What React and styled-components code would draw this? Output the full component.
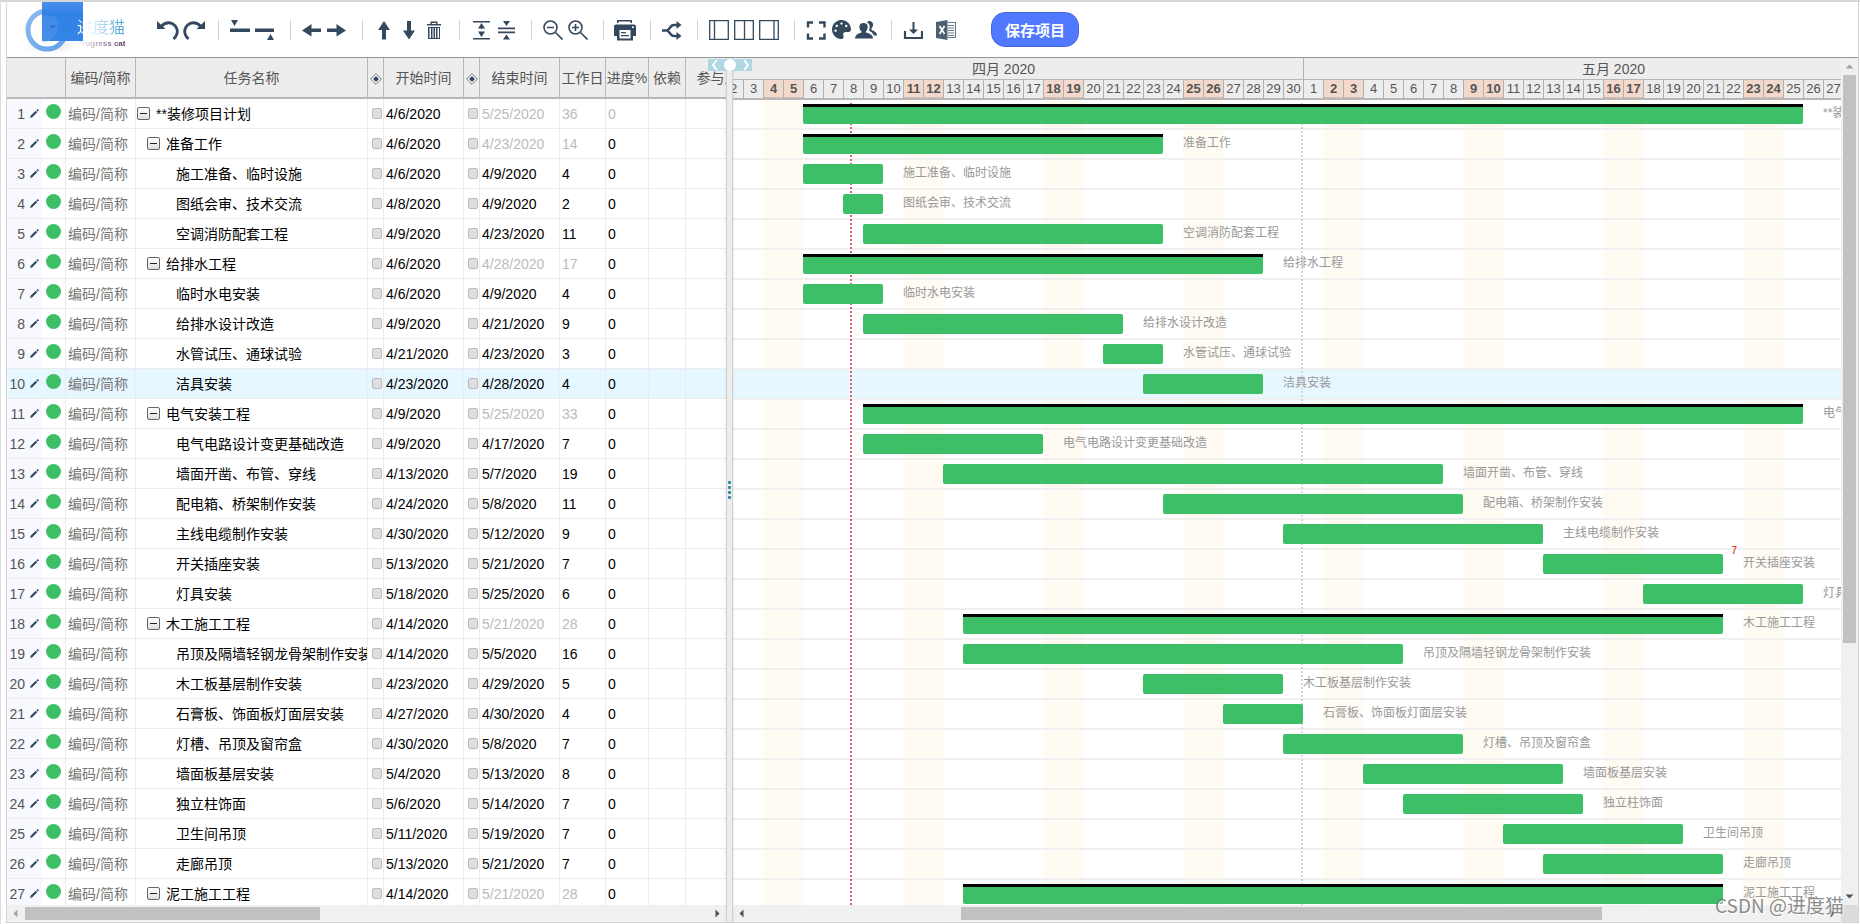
import React from 'react';
import styled, { createGlobalStyle, css } from 'styled-components';
import { FaPalette } from 'react-icons/fa';

const DAY = 20;
const ink = '#34495e';

const tasks = [
	{ name: '**装修项目计划', level: 0, group: true, start: '4/6', end: '5/25', work: 36, root: true },
	{ name: '准备工作', level: 1, group: true, start: '4/6', end: '4/23', work: 14 },
	{ name: '施工准备、临时设施', level: 2, start: '4/6', end: '4/9', work: 4 },
	{ name: '图纸会审、技术交流', level: 2, start: '4/8', end: '4/9', work: 2 },
	{ name: '空调消防配套工程', level: 2, start: '4/9', end: '4/23', work: 11 },
	{ name: '给排水工程', level: 1, group: true, start: '4/6', end: '4/28', work: 17 },
	{ name: '临时水电安装', level: 2, start: '4/6', end: '4/9', work: 4 },
	{ name: '给排水设计改造', level: 2, start: '4/9', end: '4/21', work: 9 },
	{ name: '水管试压、通球试验', level: 2, start: '4/21', end: '4/23', work: 3 },
	{ name: '洁具安装', level: 2, start: '4/23', end: '4/28', work: 4, active: true },
	{ name: '电气安装工程', level: 1, group: true, start: '4/9', end: '5/25', work: 33 },
	{ name: '电气电路设计变更基础改造', level: 2, start: '4/9', end: '4/17', work: 7 },
	{ name: '墙面开凿、布管、穿线', level: 2, start: '4/13', end: '5/7', work: 19 },
	{ name: '配电箱、桥架制作安装', level: 2, start: '4/24', end: '5/8', work: 11 },
	{ name: '主线电缆制作安装', level: 2, start: '4/30', end: '5/12', work: 9 },
	{ name: '开关插座安装', level: 2, start: '5/13', end: '5/21', work: 7, note: '7' },
	{ name: '灯具安装', level: 2, start: '5/18', end: '5/25', work: 6 },
	{ name: '木工施工工程', level: 1, group: true, start: '4/14', end: '5/21', work: 28 },
	{ name: '吊顶及隔墙轻钢龙骨架制作安装', level: 2, start: '4/14', end: '5/5', work: 16 },
	{ name: '木工板基层制作安装', level: 2, start: '4/23', end: '4/29', work: 5 },
	{ name: '石膏板、饰面板灯面层安装', level: 2, start: '4/27', end: '4/30', work: 4 },
	{ name: '灯槽、吊顶及窗帘盒', level: 2, start: '4/30', end: '5/8', work: 7 },
	{ name: '墙面板基层安装', level: 2, start: '5/4', end: '5/13', work: 8 },
	{ name: '独立柱饰面', level: 2, start: '5/6', end: '5/14', work: 7 },
	{ name: '卫生间吊顶', level: 2, start: '5/11', end: '5/19', work: 7 },
	{ name: '走廊吊顶', level: 2, start: '5/13', end: '5/21', work: 7 },
	{ name: '泥工施工工程', level: 1, group: true, start: '4/14', end: '5/21', work: 28 },
];

const months = [
	{ label: '四月 2020', count: 30, offset: 0 },
	{ label: '五月 2020', count: 31, offset: 30 },
];

// days since April 1st
const dayIndex = date => {
	const [m, d] = date.split('/').map(Number);
	return (m - 4) * 30 + d - 1;
}
// April 4th 2020 is a saturday
const isWeekend = index => index % 7 === 3 || index % 7 === 4;

const Svg = ({ children, size = 20, w }) => (
	<svg width={w || size} height={size} viewBox={`0 0 ${w || size} ${size}`} fill={ink} aria-hidden="true">{children}</svg>
)

const icons = {
	undo: (
		<Svg w={22}>
			<path d="M0 1V9H8.500Z" />
			<path d="M4 6.500Q9.500 1 15 3.500Q20.500 6.500 20.300 12Q20 16 16.500 19" fill="none" stroke={ink} strokeWidth="2.800" />
		</Svg>
	),
	redo: (
		<Svg w={22}>
			<path d="M22 1V9H13.500Z" />
			<path d="M18 6.500Q12.500 1 7 3.500Q1.500 6.500 1.700 12Q2 16 5.500 19" fill="none" stroke={ink} strokeWidth="2.800" />
		</Svg>
	),
	addAbove: <Svg><path d="M1 0h7L4.500 6ZM0 8.500h20v3.500H0Z" /></Svg>,
	addBelow: <Svg><path d="M12 20h7l-3.500-6ZM0 8.500h19v3.500H0Z" /></Svg>,
	left: <Svg><path d="M0 10.500 9.500 4v4.500H19V12H9.500v4.500Z" /></Svg>,
	right: <Svg><path d="M19 10.500 9.500 4v4.500H0V12h9.500v4.500Z" /></Svg>,
	up: <Svg><path d="M10 1 16 10h-4v9.500H8V10H4Z" /></Svg>,
	down: <Svg><path d="M10 19.500 16 10.500h-4V1H8v9.500H4Z" /></Svg>,
	trash: (
		<Svg>
			<path d="M6.500 1.500h7V4H17v1.500H3V4h3.500ZM8 3v1h4V3Z" fillRule="evenodd" />
			<path d="M4 7h12v12H4Zm1.500 1v10h1.500V8ZM8.500 8v10h1V8Zm2.500 0v10h1V8Zm2.500 0v10H15V8Z" fillRule="evenodd" />
		</Svg>
	),
	expand: <Svg><path d="M2 1h17v1.600H2ZM2 18h17v1.600H2ZM10.500 3 14 8.500H7ZM10.500 17 14 11.500H7ZM10 8h1v1h-1ZM10 11h1v1h-1Z" /></Svg>,
	collapse: <Svg><path d="M2 7.500h17v1.700H2ZM2 11.500h17v1.700H2ZM10.500 6 14 1H7ZM10.500 14.500 14 19.500H7Z" /></Svg>,
	zoomOut: (
		<Svg>
			<g fill="none" stroke={ink} strokeWidth="1.600"><circle cx="7.500" cy="7.500" r="6.500" /><path d="M12.500 12.500 19.500 19.500M4 7.500h7" /></g>
		</Svg>
	),
	zoomIn: (
		<Svg>
			<g fill="none" stroke={ink} strokeWidth="1.600"><circle cx="7.500" cy="7.500" r="6.500" /><path d="M12.500 12.500 19.500 19.500M4 7.500h7M7.500 4v7" /></g>
		</Svg>
	),
	print: (
		<Svg w={22} size={22}>
			<path d="M3 1h15v3h-1.500V2.500h-12V4H3ZM0 7.500Q0 5.500 2 5.500H20q2 0 2 2V17h-3v4.500H3V17H0ZM5.500 11v8.500h11V11ZM18 7.500V9h2V7.500Z" fillRule="evenodd" />
			<path d="M7 13h5v1.300H7ZM7 16h8v1.300H7Z" />
		</Svg>
	),
	branch: (
		<Svg>
			<path d="M0 10.500h6M5.500 10.500 9 6.500Q10 5 12 5h4M5.500 10.500 9 14.500Q10 16 12 16h4" fill="none" stroke={ink} strokeWidth="2.600" />
			<path d="M14.500 1 19.500 5 14.500 9ZM14.500 12 19.500 16l-5 4Z" />
		</Svg>
	),
	panelLeft: <Svg><path d="M.7.7h18.600v18.600H.7ZM5.500.7v18.600" fill="none" stroke={ink} strokeWidth="1.300" /></Svg>,
	panelMid: <Svg><path d="M.7.7h18.600v18.600H.7ZM10.500.7v18.600" fill="none" stroke={ink} strokeWidth="1.300" /></Svg>,
	panelRight: <Svg><path d="M.7.7h18.600v18.600H.7ZM15 .7v18.600" fill="none" stroke={ink} strokeWidth="1.300" /></Svg>,
	full: <Svg><path d="M2 7.500V2.500h5M13 2.500h5.500v5M18.500 13.500v5H13M7 18.500H2v-5" fill="none" stroke={ink} strokeWidth="2.400" /></Svg>,
	palette: <FaPalette size={19} color={ink} />,
	users: (
		<Svg w={22}>
			<path d="M12 2.500Q14-.2 17 2Q19.500 5 16.500 8.500V10Q22 11.500 22 15.500H19Q17.500 12 14 10.800Q15 7.500 14.500 5Q13.800 3 12 2.500Z" />
			<path d="M8.500 3Q12.800 3 12.800 7.300Q12.500 10 11 11.300V12.500Q18 14 18 18.500H0Q0 14 6.500 12.500V11.300Q4.500 10 4.300 7.300Q4.500 3 8.500 3Z" />
		</Svg>
	),
	download: <Svg><path d="M2 11v7h17v-7" fill="none" stroke={ink} strokeWidth="2.200" /><path d="M9.500 2h2v7.500H15L10.500 14 6 9.500h3.500Z" /></Svg>,
	excel: (
		<Svg>
			<path d="M0 2 11.500 0v20L0 18Z" fill="#4d5f72" />
			<path d="M3.500 6 8.500 14M8.500 6 3.500 14" stroke="#fff" strokeWidth="1.700" />
			<path d="M12 2.500h7.500v15H12M12 5.500h6M12 8h6M12 10.500h6M12 13h6M12 15.500h6" fill="none" stroke="#66788a" strokeWidth="1.200" />
		</Svg>
	),
};

const toolGroups = [
	[['undo', '撤销'], ['redo', '重做']],
	[['addAbove', '向上插入'], ['addBelow', '向下插入']],
	[['left', '升级'], ['right', '降级']],
	[['up', '上移'], ['down', '下移'], ['trash', '删除']],
	[['expand', '展开'], ['collapse', '折叠']],
	[['zoomOut', '缩小'], ['zoomIn', '放大']],
	[['print', '打印']],
	[['branch', '关键路径']],
	[['panelLeft', '左侧视图'], ['panelMid', '双栏视图'], ['panelRight', '右侧视图']],
	[['full', '全屏'], ['palette', '颜色'], ['users', '成员']],
];

const Pencil = () => (
	<svg width="9" height="9" viewBox="0 0 9 9" fill={ink} aria-hidden="true">
		<path d="M0 9 .8 6.600 5.800 1.800 7.200 3.200 2.300 8.200ZM6.400 1.200 7.600 0 9 1.400 7.800 2.600Z" />
	</svg>
)

const DiamondIcon = () => (
	<svg width="12" height="12" viewBox="0 0 12 12" aria-hidden="true">
		<path d="M6 .7 11.300 6 6 11.300.7 6Z" fill="#fff" stroke="#777" />
		<path d="M6 3 9 6 6 9 3 6Z" fill={ink} />
	</svg>
)

const Logo = () => (
	<LogoLink href="#" aria-label="进度猫">
		<svg width="62" height="54" viewBox="0 0 62 54" aria-hidden="true">
			<defs>
				<linearGradient id="ring" x1="0" y1="0" x2="1" y2="1">
					<stop offset="0" stopColor="#8dbcf2" />
					<stop offset="1" stopColor="#5e9fea" />
				</linearGradient>
				<linearGradient id="block" x1="0" y1="0" x2="0" y2="1">
					<stop offset="0" stopColor="#4a8fea" />
					<stop offset=".3" stopColor="#3182e6" />
					<stop offset="1" stopColor="#3584e6" />
				</linearGradient>
				<radialGradient id="haze">
					<stop offset="0" stopColor="#cfd4da" />
					<stop offset="1" stopColor="#fff" stopOpacity="0" />
				</radialGradient>
			</defs>
			<ellipse cx="30" cy="44" rx="32" ry="10" fill="url(#haze)" />
			<circle cx="26" cy="28" r="19" fill="#fff" stroke="url(#ring)" strokeWidth="5" />
			<path d="M21 0H62V39H21Z" fill="url(#block)" />
			<path d="M21 16 24 13Q30 14 35 15L37 21 36 31Q30 39 23 41L21 39Z" fill="#69a5ef" opacity=".3" />
			<path d="M29 23 36 24 30 27Z" fill="#2d74cf" />
		</svg>
		<LogoText>
			<LogoName>进度猫</LogoName>
			<LogoSub>Progress cat</LogoSub>
		</LogoText>
	</LogoLink>
)

const Toolbar = () => (
	<ToolbarWrapper>
		<Logo />
		{toolGroups.map((group, i) => (
			<ToolGroup key={i} $first={i === 0}>
				{group.map(([icon, label]) => (
					<ToolButton key={icon} type="button" title={label} aria-label={label}>{icons[icon]}</ToolButton>
				))}
			</ToolGroup>
		))}
		<ExportGroup>
			<ToolButton type="button" aria-label="下载">{icons.download}</ToolButton>
			<ToolButton type="button" aria-label="导出 Excel">{icons.excel}</ToolButton>
		</ExportGroup>
		<SaveButton type="button">保存项目</SaveButton>
	</ToolbarWrapper>
)

const Arrow = ({ dir, muted }) => {
	const turn = { left: 0, up: 90, right: 180, down: 270 }[dir];
	return (
		<ArrowButton type="button" aria-label={dir}>
			<svg width="9" height="9" viewBox="0 0 9 9" aria-hidden="true">
				<path d="M2.500 4.500 6.500.5v8Z" fill={muted ? '#a3a3a3' : '#505050'} transform={`rotate(${turn} 4.500 4.500)`} />
			</svg>
		</ArrowButton>
	)
}

const ScrollBar = ({ vertical, before, thumb, after, mutedStart }) => (
	<Scroll $vertical={vertical}>
		<Arrow dir={vertical ? 'up' : 'left'} muted={mutedStart} />
		<ScrollGap $grow={before} />
		<Thumb $grow={thumb} $vertical={vertical} />
		<ScrollGap $grow={after} />
		<Arrow dir={vertical ? 'down' : 'right'} />
	</Scroll>
)

const TaskTable = () => (
	<Table>
		<colgroup>
			{[35, 24, 70, 232, 16, 80, 16, 80, 46, 43, 37, 64].map((w, i) => <col key={i} width={w} />)}
		</colgroup>
		<thead>
			<tr>
				<HeadCell colSpan="2" />
				<HeadCell>编码/简称</HeadCell>
				<HeadCell>任务名称</HeadCell>
				<HeadCell><DiamondIcon /></HeadCell>
				<HeadCell>开始时间</HeadCell>
				<HeadCell><DiamondIcon /></HeadCell>
				<HeadCell>结束时间</HeadCell>
				<HeadCell>工作日</HeadCell>
				<HeadCell>进度%</HeadCell>
				<HeadCell>依赖</HeadCell>
				<HeadCell>参与人</HeadCell>
			</tr>
		</thead>
		<tbody>
			{tasks.map((task, i) => (
				<TaskRow key={i} $active={task.active}>
					<IndexCell $active={task.active}>
						<IndexInner>
							<IndexNumber>{i + 1}</IndexNumber>
							<Pencil />
						</IndexInner>
					</IndexCell>
					<Cell><StatusDot /></Cell>
					<Cell $color="#757575">编码/简称</Cell>
					<NameCell>
						<NameInner $level={task.level}>
							{task.group && <Toggle type="button" aria-label={'折叠 ' + task.name} />}
							<NameText>{task.name}</NameText>
						</NameInner>
					</NameCell>
					<Cell><Milestone aria-label={task.name + ' 开始里程碑'} /></Cell>
					<Cell>{task.start}/2020</Cell>
					<Cell><Milestone aria-label={task.name + ' 结束里程碑'} /></Cell>
					<Cell $color={task.group && '#bbb'}>{task.end}/2020</Cell>
					<Cell $color={task.group && '#bbb'}>{task.work}</Cell>
					<Cell $color={task.root && '#bbb'}>0</Cell>
					<Cell />
					<Cell />
				</TaskRow>
			))}
		</tbody>
	</Table>
)

const Chart = () => (
	<ChartView>
		<Track>
			<MonthRow>
				{months.map(m => <Month key={m.label} style={{ width: m.count * DAY }}>{m.label}</Month>)}
			</MonthRow>
			<DayRow>
				{months.map(m => Array.from({ length: m.count }, (_, d) => (
					<Day key={m.label + d} $weekend={isWeekend(m.offset + d)}>{d + 1}</Day>
				)))}
			</DayRow>
			<ChartBody>
				<DateLine style={{ left: dayIndex('4/8') * DAY + 7 }} $color="#e06070" />
				<DateLine style={{ left: dayIndex('5/1') * DAY - 2 }} $color="#d5d5d5" />
				{tasks.map((task, i) => {
					const from = dayIndex(task.start);
					const length = dayIndex(task.end) - from + 1;
					return (
						<ChartRow key={i} $active={task.active}>
							<Bar $group={task.group} style={{ marginLeft: from * DAY, width: length * DAY }}>
								{task.note && <Note>{task.note}</Note>}
							</Bar>
							<BarLabel>{task.name}</BarLabel>
						</ChartRow>
					)
				})}
			</ChartBody>
		</Track>
	</ChartView>
)

const App = () => (
	<>
		<GlobalStyle />
		<Page>
			<Frame>
				<Toolbar />
				<Main>
					<LeftPane>
						<TableView><TaskTable /></TableView>
						<ScrollBar before={1} thumb={295} after={390} mutedStart />
					</LeftPane>
					<Splitter>
						<PaneSwitch>
							<SwitchButton type="button" aria-label="向左">
								<svg width="8" height="10" viewBox="0 0 8 10" aria-hidden="true"><path d="M6 0 2 5 6 10" fill="none" stroke="#fff" strokeWidth="2" /></svg>
							</SwitchButton>
							<SwitchDot />
							<SwitchButton type="button" aria-label="向右">
								<svg width="8" height="10" viewBox="0 0 8 10" aria-hidden="true"><path d="M2 0 6 5 2 10" fill="none" stroke="#fff" strokeWidth="2" /></svg>
							</SwitchButton>
						</PaneSwitch>
						<Grip><i /><i /><i /><i /></Grip>
					</Splitter>
					<RightPane>
						<RightTop>
							<Chart />
							<ScrollBar vertical before={0} thumb={567} after={245} mutedStart />
						</RightTop>
						<RightBottom>
							<ScrollBar before={211} thumb={640} after={222} />
							<Corner />
						</RightBottom>
					</RightPane>
				</Main>
			</Frame>
			<Watermark>CSDN @进度猫</Watermark>
		</Page>
	</>
)

const GlobalStyle = createGlobalStyle`
	* {
		box-sizing: border-box;
	}
	body {
		margin: 0;
		font: 14px "Liberation Sans", "Noto Sans CJK SC", sans-serif;
		color: #000;
		background: #fff;
	}
	button {
		padding: 0;
		border: none;
		background: none;
		cursor: pointer;
	}
	svg {
		display: block;
		flex: none;
	}
`
const Page = styled.div`
	position: relative;
	height: 100vh;
	padding: 0 1px 1px 5px;
	border-top: 2px solid #d6d6d6;
	border-left: 1px solid #ddd;
	overflow: hidden;
`
const Frame = styled.div`
	display: flex;
	flex-direction: column;
	height: 100%;
	border: 1px solid #d6d6d6;
	border-top: none;
`
const ToolbarWrapper = styled.header`
	display: flex;
	align-items: center;
	flex: none;
	height: 56px;
	padding-left: 14px;
	border-bottom: 1px solid #969696;
`
const LogoLink = styled.a`
	display: flex;
	align-self: flex-start;
	width: 130px;
	margin-right: 7px;
	text-decoration: none;
`
const LogoText = styled.span`
	display: flex;
	flex-direction: column;
	padding-top: 15px;
	margin-left: -6px;
	white-space: nowrap;
`
const LogoName = styled.span`
	font-size: 16px;
	line-height: 22px;
	color: transparent;
	background: linear-gradient(90deg, #fff 15%, #b9def0 50%, #53a9d8 90%);
	background-clip: text;
`
const LogoSub = styled.span`
	font-size: 8px;
	font-weight: bold;
	line-height: 10px;
	color: transparent;
	background: linear-gradient(90deg, #fff, #a393ad 50%, #4d2c59);
	background-clip: text;
`
const ToolGroup = styled.div`
	display: flex;
	align-items: center;
	gap: ${props => props.$first ? 6 : 5}px;
	height: 20px;
	padding: ${props => props.$first ? '0 14px 0 0' : '0 15px 0 11px'};
	border-right: 1px solid #d4d4d4;
`
const ExportGroup = styled(ToolGroup)`
	gap: 13px;
	padding-right: 35px;
	border-right: none;
`
const ToolButton = styled.button`
	display: flex;
	align-items: center;
	justify-content: center;
	width: 20px;
	height: 22px;
`
const SaveButton = styled.button`
	height: 35px;
	padding: 0 13px;
	border: 1px solid #4468dc;
	border-radius: 14px;
	font: bold 15px "Liberation Sans", "Noto Sans CJK SC", sans-serif;
	color: #fff;
	background: #5079ff;
`
const Main = styled.main`
	display: flex;
	flex: 1;
	min-height: 0;
`
const LeftPane = styled.section`
	display: flex;
	flex-direction: column;
	flex: 0 0 719px;
	min-width: 0;
`
const TableView = styled.div`
	flex: 1;
	min-height: 0;
	overflow: hidden;
`
const Table = styled.table`
	width: 743px;
	table-layout: fixed;
	border-collapse: separate;
	border-spacing: 0;
`
const HeadCell = styled.th`
	height: 41px;
	padding: 0 0 2px;
	border-right: 1px solid #b8b8b8;
	border-bottom: 2px solid #b8b8b8;
	font-weight: normal;
	color: #555;
	background: #ededed;
	white-space: nowrap;

	svg {
		margin: 4px auto 0;
	}
`
const TaskRow = styled.tr`
	background: ${props => props.$active ? '#e6f7ff' : '#fff'};
`
const Cell = styled.td`
	height: 30px;
	padding: 0 0 0 2px;
	border-right: 1px solid #ececec;
	border-bottom: 1px solid #ececec;
	line-height: 20px;
	color: ${props => props.$color || '#000'};
	white-space: nowrap;
	overflow: hidden;
`
const IndexCell = styled(Cell)`
	padding: 0;
	border-right: none;
	color: #555;
	${props => !props.$active && css`background: #f8f8ff;`}
`
const NameCell = styled(Cell)`
	padding-left: 1px;
`
const IndexInner = styled.div`
	display: flex;
	align-items: center;
	gap: 5px;
`
const IndexNumber = styled.span`
	width: 18px;
	text-align: right;
`
const StatusDot = styled.div`
	width: 15px;
	height: 15px;
	margin: 0 0 4px 2px;
	border-radius: 50%;
	background: #3dbf67;
`
const NameInner = styled.div`
	display: flex;
	align-items: center;
	gap: 6px;
	padding-left: ${props => props.$level === 2 ? 39 : props.$level * 10}px;
`
const NameText = styled.span`
	overflow: hidden;
`
const Toggle = styled.button`
	display: flex;
	align-items: center;
	justify-content: center;
	flex: none;
	width: 13px;
	height: 13px;
	border: 1px solid #666;
	border-radius: 2px;
	background: linear-gradient(#fff, #ddd);

	&::before {
		content: '';
		width: 7px;
		height: 1px;
		background: #222;
	}
`
const Milestone = styled.input.attrs({
	type: 'checkbox',
})`
	display: block;
	appearance: none;
	width: 10px;
	height: 11px;
	margin: 0 0 0 2px;
	border: 1px solid #bbb;
	border-radius: 2px;
	background: #dedede;
`
const Splitter = styled.div`
	position: relative;
	z-index: 2;
	display: flex;
	align-items: center;
	justify-content: center;
	flex: 0 0 7px;
	border-left: 1px solid #d0d0d0;
	border-right: 1px solid #d0d0d0;
	background: #ededed;
	box-shadow: 0 0 2px rgba(0, 0, 0, .15);
`
const PaneSwitch = styled.div`
	position: absolute;
	top: 1px;
	left: -19px;
	display: flex;
	align-items: center;
	justify-content: space-between;
	width: 44px;
	height: 12px;
	background: #b0d8e3;
`
const SwitchButton = styled.button`
	display: flex;
	align-items: center;
	justify-content: center;
	width: 13px;
	height: 12px;
`
const SwitchDot = styled.span`
	width: 12px;
	height: 12px;
	border-radius: 50%;
	background: #fff;
`
const Grip = styled.div`
	display: flex;
	flex-direction: column;
	gap: 2px;

	i {
		width: 3px;
		height: 3px;
		border-radius: 1px;
		background: #2e8b9e;
	}
`
const RightPane = styled.section`
	display: flex;
	flex-direction: column;
	flex: 1;
	min-width: 0;
`
const RightTop = styled.div`
	display: flex;
	flex: 1;
	min-height: 0;
`
const RightBottom = styled.div`
	display: flex;
	flex: none;
`
const Corner = styled.div`
	width: 17px;
	background: #dcdcdc;
`
const ChartView = styled.div`
	flex: 1;
	min-width: 0;
	overflow: hidden;
`
const Track = styled.div`
	width: 1220px;
	margin-left: -30px;
`
const MonthRow = styled.div`
	display: flex;
	height: 22px;
	color: #555;
	background: #ededed;
	border-bottom: 1px solid #b8b8b8;
`
const Month = styled.div`
	border-left: 1px solid #b0b0b0;
	line-height: 23px;
	text-align: center;
`
const DayRow = styled.div`
	display: flex;
	height: 20px;
	border-bottom: 2px solid #b8b8b8;
	background: #ededed;
`
const Day = styled.div`
	width: ${DAY}px;
	border-left: 1px solid #b0b0b0;
	font-size: 13px;
	line-height: 18px;
	text-align: center;
	color: #555;
	${props => props.$weekend && css`
		font-weight: bold;
		background: #f2d9cc;
		box-shadow: inset 0 -1px #d3bdb2;
	`}
`
const ChartBody = styled.div`
	position: relative;
	background: repeating-linear-gradient(90deg, #fff 0 60px, #fffaf2 60px 100px, #fff 100px 140px);
`
const DateLine = styled.div`
	position: absolute;
	top: 3px;
	bottom: 0;
	width: 2px;
	background: repeating-linear-gradient(${props => props.$color} 0 2px, transparent 2px 4px);
`
const ChartRow = styled.div`
	display: flex;
	align-items: flex-start;
	gap: 20px;
	height: 30px;
	padding-top: 4px;
	border-bottom: 2px solid #f0f0f0;
	${props => props.$active && css`background: #e6f7ff;`}
`
const Bar = styled.div`
	position: relative;
	flex: none;
	height: 20px;
	border-radius: 2px;
	background: #3dbf67;
	${props => props.$group && css`
		border-top: 3px solid #000;
		border-radius: 0 0 2px 2px;
	`}
`
const Note = styled.span`
	position: absolute;
	top: -9px;
	right: -14px;
	font-size: 10px;
	line-height: 12px;
	color: #e00;
`
const BarLabel = styled.span`
	font-size: 12px;
	line-height: 18px;
	color: #999;
	white-space: nowrap;
`
const Scroll = styled.div`
	display: flex;
	flex: ${props => props.$vertical ? 'none' : '0 0 17px'};
	flex-direction: ${props => props.$vertical ? 'column' : 'row'};
	background: #f0f0f0;
	${props => props.$vertical && css`width: 17px;`}
	${RightBottom} & {
		flex: 1;
		height: 17px;
	}
`
const ScrollGap = styled.div`
	flex: ${props => props.$grow} 0 0;
`
const Thumb = styled.div`
	flex: ${props => props.$grow} 0 0;
	margin: ${props => props.$vertical ? '0 2px' : '2px 0'};
	background: #c1c1c1;
`
const ArrowButton = styled.button`
	display: flex;
	align-items: center;
	justify-content: center;
	flex: none;
	width: 17px;
	height: 17px;
`
const Watermark = styled.div`
	position: absolute;
	right: 16px;
	bottom: 5px;
	z-index: 3;
	font: 19px/28px "Noto Sans CJK SC", sans-serif;
	color: rgba(110, 110, 110, .8);
	text-shadow: 1px 1px 1px #fff;
	pointer-events: none;
`
export default App;
